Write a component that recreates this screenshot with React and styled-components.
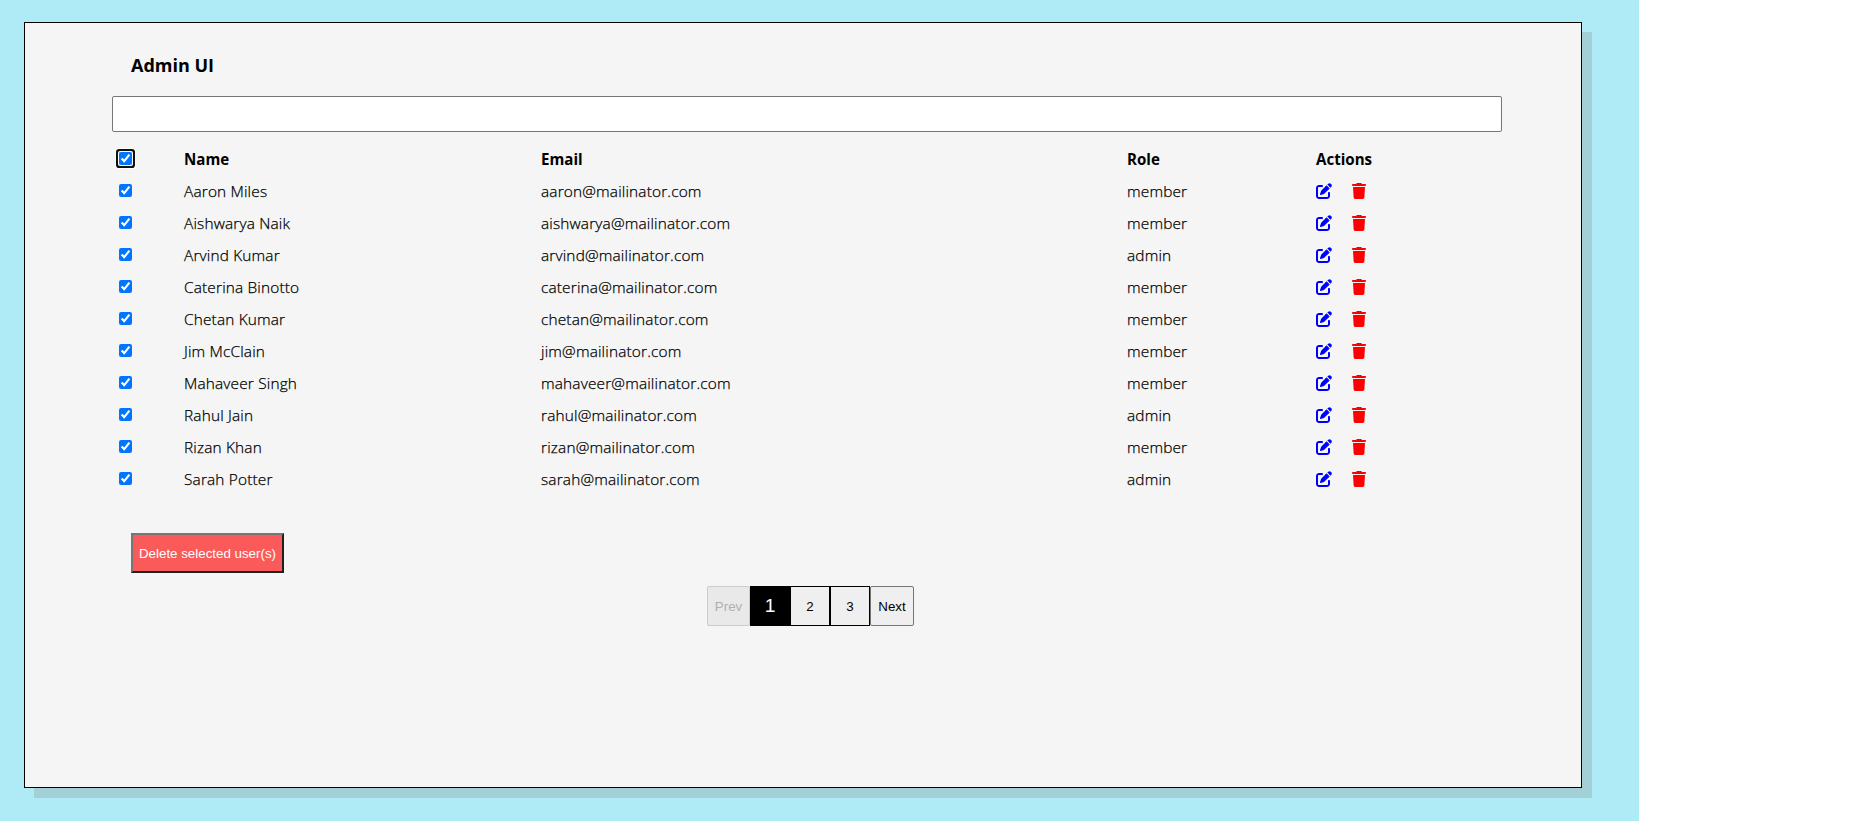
import React from "react";
import styled, { createGlobalStyle } from "styled-components";
import { FaPenToSquare, FaTrash } from "react-icons/fa6";

const GlobalStyle = createGlobalStyle`
  * { box-sizing: border-box; }
  body { margin: 0; background: #fff; overflow: hidden; }
`;

const Backdrop = styled.div`
  width: 1639px;
  height: 821px;
  padding: 22px 57px 33px 24px;
  background: #aeebf6;
  font-family: "Open Sans", "Noto Sans", sans-serif;
  color: #000;
`;

const Card = styled.main`
  height: 766px;
  padding: 30px 79px 0 87px;
  border: 1px solid #000;
  background: #f5f5f5;
  box-shadow: 10px 10px 0 #a3cfd6;
`;

const Title = styled.h1`
  margin: 0 0 19px 19px;
  font-size: 18px;
  line-height: 24px;
  font-weight: 700;
`;

const SearchInput = styled.input`
  display: block;
  width: 1390px;
  height: 36px;
  border: 1px solid #767676;
  border-radius: 2px;
  background: #fff;
`;

const Table = styled.div`
  margin-top: 11px;
`;

const Row = styled.div`
  display: grid;
  grid-template-columns: 65px 357px 586px 189px 1fr;
  height: 32px;
  padding-left: 7px;
  line-height: 32px;
  font-size: ${(p) => (p.$head ? "15.1px" : "15.4px")};
  font-weight: ${(p) => (p.$head ? 700 : 300)};
`;

const Cell = styled.span`
  white-space: nowrap;
  padding-top: ${(p) => (p.$head ? 0 : "1px")};
  letter-spacing: ${(p) => (p.$head ? 0 : "0.17px")};
  -webkit-text-stroke: ${(p) => (p.$head ? 0 : "0.25px")} #000;
`;

const CheckFrame = styled.span`
  width: 13px;
  height: 13px;
  margin-top: 9px;
  border-radius: 1px;
  box-shadow: ${(p) =>
    p.$focused ? "0 0 0 1px #fff, 0 0 0 3px #101010, 0 0 0 4px #fff" : "none"};
`;

const Checkbox = styled.input`
  display: block;
  width: 13px;
  height: 13px;
  margin: 0;
  accent-color: #0075ff;
`;

const Actions = styled.div`
  display: flex;
  align-items: flex-start;
  gap: 19px;
  padding-top: 8px;
  color: red;

  svg:first-child { color: blue; }
`;

const DeleteButton = styled.button`
  display: block;
  width: 153px;
  height: 40px;
  margin: 38px 0 13px 19px;
  padding: 0;
  border: 2px solid;
  border-color: #767676 #212121 #212121 #767676;
  background: #fa5a5a;
  color: #fff;
  font: 13.333px "Liberation Sans", Arial, sans-serif;
`;

const Pager = styled.nav`
  display: flex;
  margin-left: 595px;
`;

const PageButton = styled.button`
  width: ${(p) => p.$width}px;
  height: 40px;
  padding: 0;
  border: 1px solid ${(p) => (p.$number ? "#000" : "#767676")};
  border-radius: ${(p) => (p.$number ? 0 : "2px")};
  background: ${(p) => (p.$active ? "#000" : "#efefef")};
  color: ${(p) => (p.$active ? "#fff" : "#000")};
  font: ${(p) => (p.$active ? "19.2px" : "13.333px")} "Liberation Sans", Arial, sans-serif;

  &:disabled {
    border-color: #cbcbcb;
    background: #e9e9e9;
    color: #b0b0b0;
  }
`;

const users = [
  ["Aaron Miles", "aaron", "member"],
  ["Aishwarya Naik", "aishwarya", "member"],
  ["Arvind Kumar", "arvind", "admin"],
  ["Caterina Binotto", "caterina", "member"],
  ["Chetan Kumar", "chetan", "member"],
  ["Jim McClain", "jim", "member"],
  ["Mahaveer Singh", "mahaveer", "member"],
  ["Rahul Jain", "rahul", "admin"],
  ["Rizan Khan", "rizan", "member"],
  ["Sarah Potter", "sarah", "admin"],
];

export default function App() {
  return (
    <>
      <GlobalStyle />
      <Backdrop>
        <Card>
          <Title>Admin UI</Title>
          <SearchInput type="text" />
          <Table>
            <Row $head>
              <CheckFrame $focused>
                <Checkbox type="checkbox" defaultChecked />
              </CheckFrame>
              <Cell $head>Name</Cell>
              <Cell $head>Email</Cell>
              <Cell $head>Role</Cell>
              <Cell $head>Actions</Cell>
            </Row>
            {users.map(([name, mailbox, role]) => (
              <Row key={mailbox}>
                <CheckFrame>
                  <Checkbox type="checkbox" defaultChecked />
                </CheckFrame>
                <Cell>{name}</Cell>
                <Cell>{mailbox}@mailinator.com</Cell>
                <Cell>{role}</Cell>
                <Actions>
                  <FaPenToSquare size={16} />
                  <FaTrash size={16} />
                </Actions>
              </Row>
            ))}
          </Table>
          <DeleteButton>Delete selected user(s)</DeleteButton>
          <Pager>
            <PageButton $width={43} disabled>Prev</PageButton>
            <PageButton $width={40} $number $active>1</PageButton>
            <PageButton $width={40} $number>2</PageButton>
            <PageButton $width={40} $number>3</PageButton>
            <PageButton $width={44}>Next</PageButton>
          </Pager>
        </Card>
      </Backdrop>
    </>
  );
}
